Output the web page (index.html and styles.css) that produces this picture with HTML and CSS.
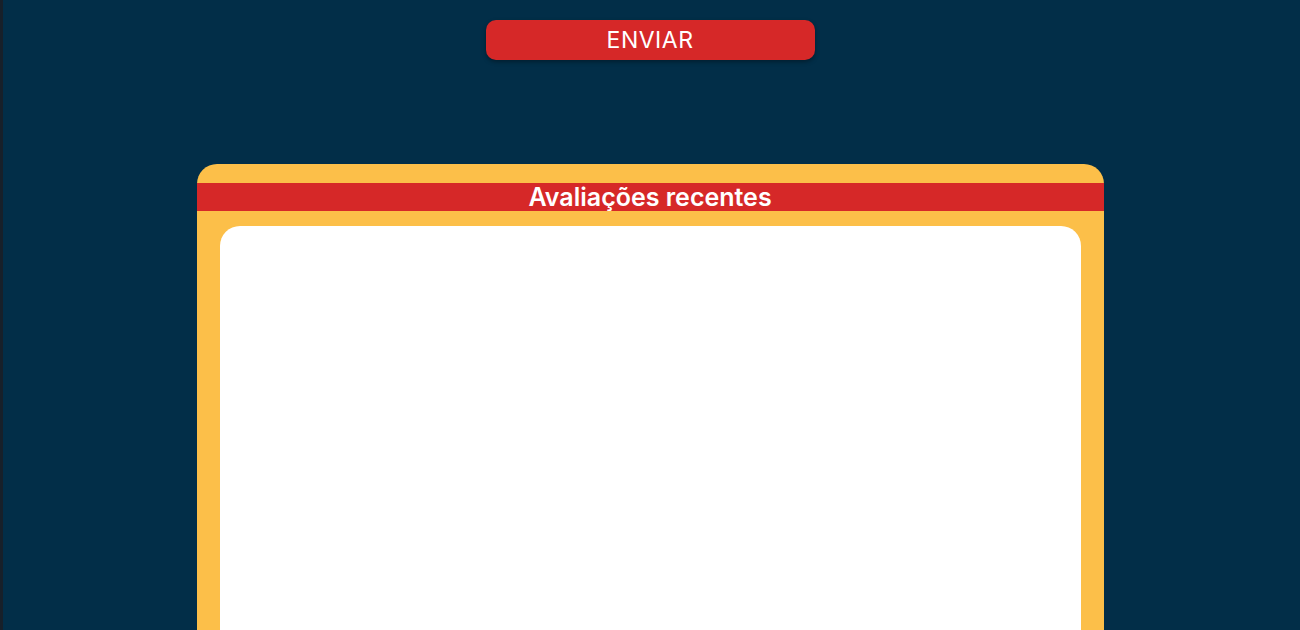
FILE: index.html
```html
<!DOCTYPE html>
<html lang="pt">
<head>
<meta charset="utf-8">
<title>Avaliações</title>
<link rel="stylesheet" href="styles.css">
</head>
<body>
<div class="page">
  <form class="form">
    <button type="button" class="send">ENVIAR</button>
  </form>
  <section class="reviews">
    <h2 class="reviews-title">Avaliações recentes</h2>
    <div class="reviews-list"></div>
  </section>
</div>
</body>
</html>
```
FILE: styles.css
```css
html, body {
  margin: 0;
  padding: 0;
  background: #022e48;
  height: 100%;
  overflow: hidden;
}
body {
  border-left: 3px solid #17202a;
  box-sizing: border-box;
  font-family: Inter, "Noto Sans", sans-serif;
}
.page {
  display: flex;
  flex-direction: column;
  align-items: center;
  padding-top: 20px;
  margin-left: -3px;
}
.form {
  display: flex;
  justify-content: center;
}
.send {
  width: 329px;
  height: 40px;
  border: none;
  border-radius: 10px;
  background: #d62828;
  color: #fff;
  font-family: Inter, "Noto Sans", sans-serif;
  font-size: 23px;
  font-weight: 400;
  letter-spacing: 0.5px;
  box-shadow: 0 2px 4px rgba(0, 0, 0, 0.35);
  padding: 0;
}
.reviews {
  margin-top: 104px;
  width: 907px;
  background: #fcbf49;
  border-radius: 20px 20px 0 0;
  padding-top: 19px;
  height: 466px;
  box-sizing: border-box;
  display: flex;
  flex-direction: column;
}
.reviews-title {
  margin: 0;
  background: #d62828;
  color: #fff;
  text-align: center;
  font-size: 25px;
  font-weight: 600;
  height: 28px;
  line-height: 28px;
}
.reviews-list {
  margin: 15px 23px 0;
  flex: 1;
  background: #fff;
  border-radius: 20px 20px 0 0;
}
```
